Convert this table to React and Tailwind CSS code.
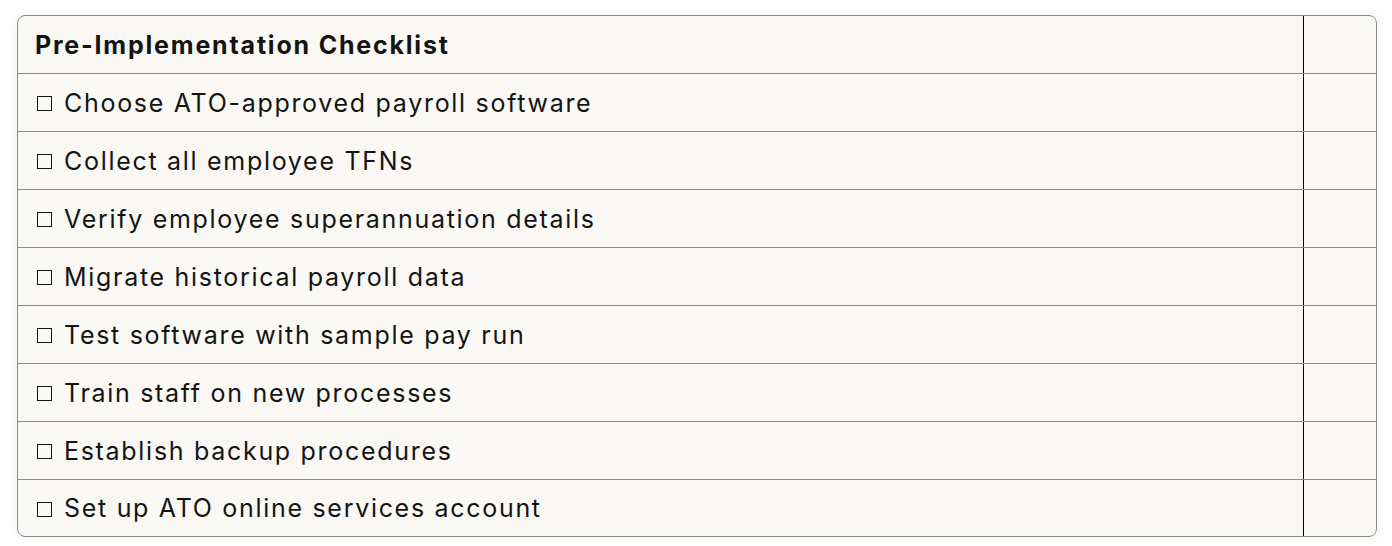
import React from 'react';

const items = [
    "Choose ATO-approved payroll software",
    "Collect all employee TFNs",
    "Verify employee superannuation details",
    "Migrate historical payroll data",
    "Test software with sample pay run",
    "Train staff on new processes",
    "Establish backup procedures",
    "Set up ATO online services account",
];

const App = () => {
    return (
        <div className="w-[1392px] h-[546px] bg-white pt-[15px] pl-[17px] font-['Inter',sans-serif] text-[#141413]">
            {/* Checklist table */}
            <div className="w-[1360px] rounded-lg border border-[#8c8c8a] bg-[#f9f8f5] overflow-hidden shadow-[0_0_12px_rgba(0,0,0,0.06)]">
                <div className="grid grid-cols-[1fr_72px] h-[58px] border-b border-[#8c8c8a]">
                    <div className="flex items-center pl-[17px] pt-[2px] text-[25px] font-bold tracking-[1.8px] border-r border-black">
                        Pre-Implementation Checklist
                    </div>
                    <div />
                </div>
                {items.map((item, i) => (
                    <div
                        key={item}
                        className={`grid grid-cols-[1fr_72px] ${i < items.length - 1 ? "h-[58px] border-b border-[#8c8c8a]" : "h-[56px]"}`}
                    >
                        <div className="flex items-center pl-[19px] pt-[2px] text-[25px] tracking-[1.7px] border-r border-black">
                            <span className="inline-block w-[15px] h-[15px] border border-[#141413] mr-[12px]" />
                            {item}
                        </div>
                        <div />
                    </div>
                ))}
            </div>
        </div>
    );
};

export default App;
